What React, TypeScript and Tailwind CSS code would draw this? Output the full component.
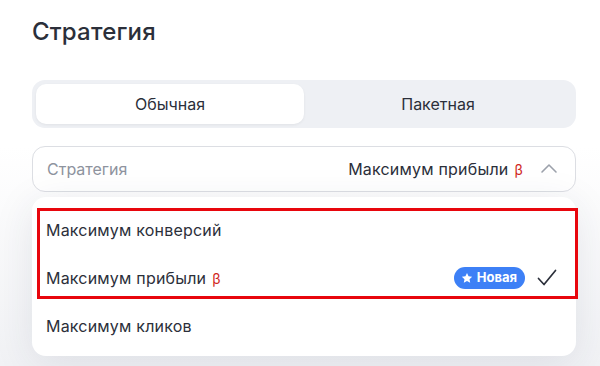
import React, { useState } from 'react';

const font = { fontFamily: 'Inter, "Noto Sans", sans-serif' };

const Beta = () => <span className="ml-1.5 text-[14px] text-[#d0261c]">β</span>;

const App: React.FC = () => {
  const [tab, setTab] = useState('normal');

  return (
    <div
      className="w-[600px] h-[366px] overflow-hidden bg-gradient-to-b from-white from-40% to-[#f1f2f5] text-[#2b2f3a]"
      style={font}
    >
      <div className="pl-8 pr-6 pt-[17px]">
        <h1 className="text-[24px] font-medium leading-[30px] tracking-[0.2px]">Стратегия</h1>

        <div className="mt-[33px] flex h-12 rounded-[13px] bg-[#eef0f4] p-1">
          <button
            onClick={() => setTab('normal')}
            className={`flex-1 rounded-[10px] text-[16px] ${tab === 'normal' ? 'bg-white shadow-[0_1px_3px_rgba(0,0,0,0.06)]' : ''}`}
          >
            Обычная
          </button>
          <button
            onClick={() => setTab('batch')}
            className={`flex-1 rounded-[10px] text-[16px] ${tab === 'batch' ? 'bg-white shadow-[0_1px_3px_rgba(0,0,0,0.06)]' : ''}`}
          >
            Пакетная
          </button>
        </div>

        <div className="mt-[18px] flex h-[46px] items-center rounded-[13px] border border-[#dcdee3] bg-white pl-[14px] pr-[16px]">
          <span className="text-[16px] text-[#8e939e]">Стратегия</span>
          <span className="ml-auto flex items-center text-[16px] tracking-[0.2px]">
            Максимум прибыли
            <Beta />
          </span>
          <svg className="ml-[16px]" width="20" height="20" viewBox="0 0 20 20" fill="none">
            <path d="M3 13L10 6L17 13" stroke="#9ca1ab" strokeWidth="1.6" strokeLinecap="round" strokeLinejoin="round" />
          </svg>
        </div>

        <div className="relative mt-[5px] rounded-[14px] bg-white pt-[9px] pb-[6px] shadow-[0_8px_40px_rgba(40,50,80,0.10)]">
          <div className="flex h-12 items-center px-[14px] text-[16px] tracking-[0.2px]">Максимум конверсий</div>
          <div className="flex h-12 items-center px-[14px] text-[16px] tracking-[0.2px]">
            Максимум прибыли
            <Beta />
            <span className="ml-auto flex h-[22px] items-center gap-1 rounded-full bg-[#3d80f6] pl-[7px] pr-[8px] text-[13px] font-bold tracking-normal text-white">
              <svg width="12" height="12" viewBox="0 0 24 24" fill="white">
                <path d="M12 1.8l3.1 6.6 7.2.9-5.3 5 1.4 7.1L12 17.9l-6.4 3.5 1.4-7.1-5.3-5 7.2-.9z" />
              </svg>
              Новая
            </span>
            <svg className="ml-[11px] mr-[4px]" width="22" height="22" viewBox="0 0 22 22" fill="none">
              <path d="M2.5 11.5L8 17.5L19.5 3.5" stroke="#2b2f3a" strokeWidth="1.7" strokeLinecap="round" strokeLinejoin="round" />
            </svg>
          </div>
          <div className="flex h-12 items-center px-[14px] text-[16px] tracking-[0.2px]">Максимум кликов</div>

          <div className="pointer-events-none absolute left-[5px] top-[11px] h-[91px] w-[541px] border-[3px] border-[#e8060d]" />
        </div>
      </div>
    </div>
  );
};

export default App;
